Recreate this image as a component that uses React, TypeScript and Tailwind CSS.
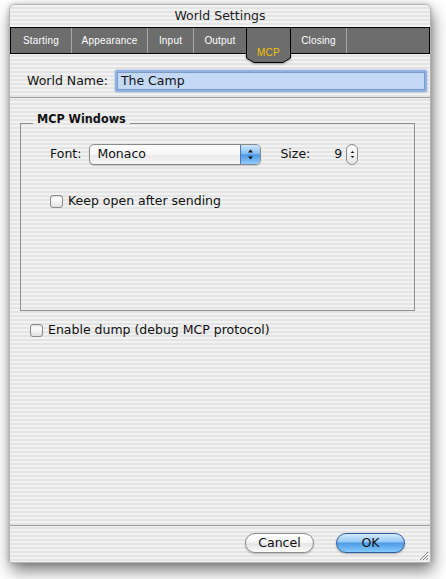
import React from "react";

const stripes =
  "bg-[repeating-linear-gradient(180deg,#f2f2f2_0px,#f2f2f2_2px,#e4e4e4_2px,#e4e4e4_4px)]";

const tabs = [
  { label: "Starting", cls: "w-[61px] border-r border-[#a8a8a8]" },
  { label: "Appearance", cls: "w-[76px] border-r border-[#a8a8a8]" },
  { label: "Input", cls: "w-[46px] border-r border-[#a8a8a8]" },
  { label: "Output", cls: "w-[52px]" },
];

function Checkbox() {
  return (
    <span className="w-[13px] h-[13px] rounded-[3px] border border-[#8b8b8b] bg-[linear-gradient(180deg,#ffffff_0%,#f4f4f4_50%,#e2e2e2_100%)] shadow-[inset_0_1px_1px_rgba(0,0,0,0.15)] shrink-0" />
  );
}

function UpDown({ size = 5 }: { size?: number }) {
  return (
    <svg width={size + 2} height={11} viewBox="0 0 7 11">
      <path d="M3.5 0.5 L6 3.5 H1 Z" fill="#111" />
      <path d="M3.5 10.5 L6 7.5 H1 Z" fill="#111" />
    </svg>
  );
}

export default function App() {
  return (
    <div className="h-[579px] overflow-hidden bg-white pt-[4px] pl-[9px] font-['DejaVu_Sans',sans-serif] text-[12.5px] text-[#111]">
      {/* window */}
      <div
        className={`relative w-[422px] h-[559px] flex flex-col rounded-t-[5px] rounded-b-[2px] border border-[#b5b5b5] shadow-[2px_8px_16px_rgba(0,0,0,0.5),0_0_5px_rgba(0,0,0,0.2)] ${stripes}`}
      >
        {/* TITLE */}
        <div className="h-[22px] flex items-center justify-center text-[12.5px] text-[#1c1c1c]">
          World Settings
        </div>

        {/* TOOLBAR */}
        <div className="h-[27px] flex border border-black bg-[#6d6d6d] font-['Liberation_Sans',sans-serif] text-[10px] text-white tracking-[0.2px]">
          {tabs.map((t) => (
            <div key={t.label} className={`${t.cls} flex items-center justify-center`}>
              {t.label}
            </div>
          ))}
          <div className="relative w-[45px] border-x border-black">
            <svg
              className="absolute left-[-1px] top-[24px] drop-shadow-[0_1px_1px_rgba(0,0,0,0.35)]"
              width="45"
              height="11"
              viewBox="0 0 45 11"
            >
              <path d="M0.5 0 V6 L8 10.5 H37 L44.5 6 V0 Z" fill="#6d6d6d" />
              <path d="M0.5 0 V6 L8 10.5 H37 L44.5 6 V0" fill="none" stroke="#000" />
            </svg>
            <span className="absolute left-0 right-0 top-[20px] z-10 text-center leading-[10px] text-[#f5c400]">
              MCP
            </span>
          </div>
          <div className="w-[56px] border-r border-[#a8a8a8] flex items-center justify-center">
            Closing
          </div>
          <div className="flex-1" />
        </div>

        {/* WORLD NAME */}
        <div className="mt-[16px] flex items-center pl-[17px] pr-[3px]">
          <span className="mr-[7px]">World Name:</span>
          <div className="flex-1 h-[22px] rounded-[2px] border-[2px] border-[#8fb2e2] shadow-[0_0_2px_rgba(70,120,200,0.6)] bg-[#c3d9f5] flex items-center">
            <div className="h-full flex-1 border border-[#7c9cc8] flex items-center pl-[3px] leading-none">
              The Camp
            </div>
          </div>
        </div>

        <div className="mt-[5px] h-px bg-[#9d9d9d]" />

        {/* MCP WINDOWS GROUP */}
        <fieldset className="mt-[13px] ml-[10px] w-[395px] h-[200px] border border-[#8f8f8f]">
          <legend className="ml-[12px] px-[4px] pb-[8px] leading-[16px] font-bold font-['DejaVu_Sans_Condensed','DejaVu_Sans',sans-serif]">
            MCP Windows
          </legend>

          <div className="mt-[9px] pl-[29px] flex items-center h-[21px]">
            <span>Font:</span>
            <div className="ml-[8px] w-[172px] h-[21px] flex rounded-[5px] border border-[#8a8a8a] bg-[linear-gradient(180deg,#ffffff_0%,#f6f6f6_50%,#e9e9e9_51%,#f7f7f7_100%)] shadow-[0_1px_1px_rgba(0,0,0,0.2)] overflow-hidden">
              <span className="flex-1 flex items-center pl-[7px]">Monaco</span>
              <span className="w-[20px] h-full flex items-center justify-center border-l border-[#4d77b0] bg-[linear-gradient(180deg,#cfe6fb_0%,#86bdf0_45%,#4b97e4_52%,#8fcdfd_100%)]">
                <UpDown />
              </span>
            </div>
            <span className="ml-[19px]">Size:</span>
            <span className="w-[32px] text-right">9</span>
            <span className="ml-[4px] w-[12px] h-[21px] rounded-full border border-[#8a8a8a] bg-[linear-gradient(180deg,#ffffff_0%,#f3f3f3_50%,#e6e6e6_100%)] flex items-center justify-center">
              <UpDown size={3} />
            </span>
          </div>

          <label className="mt-[30px] pl-[29px] flex items-center h-[13px] gap-[5px]">
            <Checkbox />
            <span>Keep open after sending</span>
          </label>
        </fieldset>

        <label className="mt-[12px] ml-[20px] flex items-center h-[14px] gap-[5px]">
          <Checkbox />
          <span>Enable dump (debug MCP protocol)</span>
        </label>

        {/* FOOTER */}
        <div className="mt-auto h-px bg-[#9d9d9d]" />
        <div className="flex justify-end gap-[22px] pr-[25px] pt-[7px] pb-[9px]">
          <button className="w-[69px] h-[20px] rounded-full border border-[#8c8c8c] bg-[linear-gradient(180deg,#ffffff_0%,#f7f7f7_45%,#e4e4e4_55%,#fbfbfb_100%)] shadow-[0_1px_2px_rgba(0,0,0,0.25)] leading-none">
            Cancel
          </button>
          <button className="w-[69px] h-[20px] rounded-full border border-[#2f5e9e] bg-[linear-gradient(180deg,#d4ebff_0%,#97c9f6_42%,#4f9be6_52%,#86cbfe_100%)] shadow-[0_1px_2px_rgba(0,0,0,0.3)] leading-none">
            OK
          </button>
        </div>

        {/* resize grip */}
        <svg className="absolute right-[1px] bottom-[1px]" width="12" height="12" viewBox="0 0 12 12">
          <path d="M11 3 L3 11 M11 6 L6 11 M11 9 L9 11" stroke="#8a8a8a" strokeWidth="1" />
          <path d="M12 4 L4 12 M12 7 L7 12 M12 10 L10 12" stroke="#ffffff" strokeWidth="1" />
        </svg>
      </div>
    </div>
  );
}
